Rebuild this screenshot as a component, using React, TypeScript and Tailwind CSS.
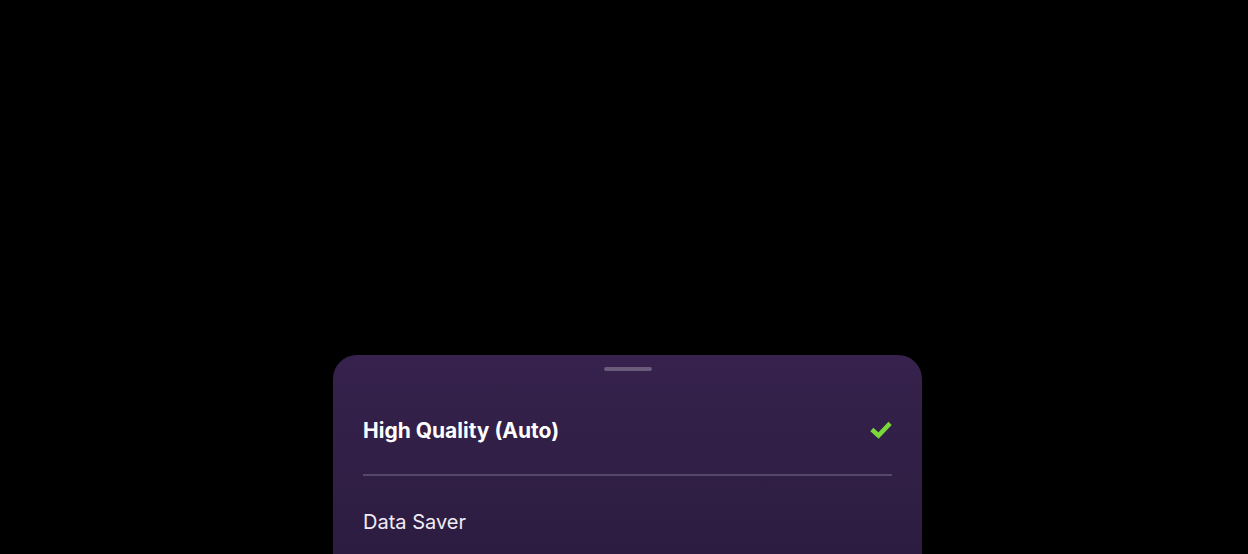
import React from "react";

export default function App() {
  return (
    <div className="w-[1248px] h-[554px] bg-black overflow-hidden pt-[355px] pl-[333px]" style={{ fontFamily: "Inter, 'Open Sans', sans-serif" }}>
      <div className="w-[589px] h-[240px] rounded-t-[24px] bg-gradient-to-b from-[#36224c] to-[#2b1b3f] flex flex-col px-[30px]">
        <div className="flex justify-center pt-[12px] h-[16px] shrink-0">
          <div className="w-[48px] h-[4px] rounded-full bg-[#6a5c7a]" />
        </div>
        <div className="flex items-center justify-between h-[103px] pt-[16px] shrink-0">
          <span className="text-white text-[21px] font-bold">High Quality (Auto)</span>
          <svg width="22" height="20" viewBox="0 0 22 20">
            <path d="M3.5 10 L8.5 14.5 L18.5 4" fill="none" stroke="#7ad83a" strokeWidth="4.5" strokeLinecap="square" />
          </svg>
        </div>
        <div className="h-[2px] bg-[#574769] shrink-0" />
        <div className="flex items-center h-[92px] shrink-0">
          <span className="text-[#f1ecf5] text-[20px]">Data Saver</span>
        </div>
      </div>
    </div>
  );
}
